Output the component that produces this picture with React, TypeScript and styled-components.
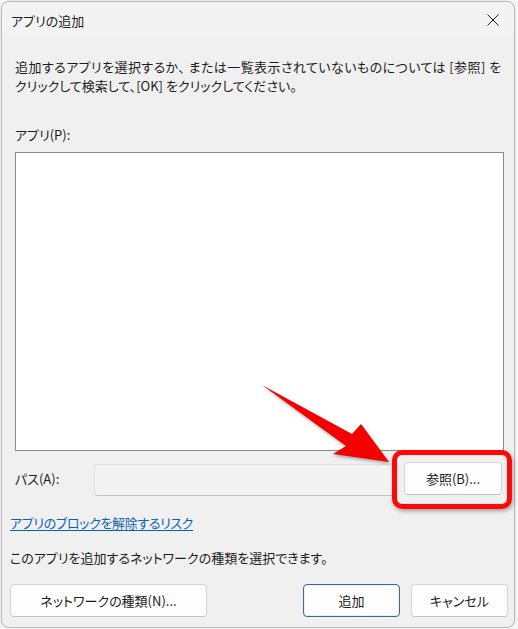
import styled, { createGlobalStyle } from "styled-components";

const GlobalStyle = createGlobalStyle`
  html, body {
    margin: 0;
    padding: 0;
    background: #f7f7f7;
  }
  body {
    font-family: "Noto Sans CJK JP", "Noto Sans", sans-serif;
    font-feature-settings: "palt";
    color: #1b1b1b;
  }
`;

const Window = styled.div`
  position: relative;
  box-sizing: border-box;
  width: 514px;
  height: 627px;
  margin: 1px 0 0 1px;
  border: 1px solid #b9b9b9;
  border-radius: 8px;
  background: #f0f0f0;
  box-shadow: 0 0 3px rgba(0, 0, 0, 0.12);
  display: flex;
  flex-direction: column;
`;

const TitleBar = styled.div`
  flex-shrink: 0;
  height: 36px;
  display: flex;
  align-items: center;
  justify-content: space-between;
  padding: 0 10px 0 9px;
  background: #f3f3f3;
  border-radius: 8px 8px 0 0;
  font-size: 13px;
`;

const CloseButton = styled.div`
  width: 14px;
  height: 14px;
  display: flex;
  align-items: center;
  justify-content: center;
  margin-right: 4px;
`;

const Body = styled.div`
  flex: 1;
  display: flex;
  flex-direction: column;
  padding: 0 6px 9px 8px;
  font-size: 13px;
`;

const Upper = styled.div`
  display: flex;
  flex-direction: column;
  padding: 0 4px 0 5px;
`;

const Text = styled.div<{ $top: number }>`
  margin-top: ${(p) => p.$top}px;
  line-height: 20px;
  white-space: nowrap;
`;

const Line = styled.span<{ $spacing?: number }>`
  display: block;
  height: 19px;
  letter-spacing: ${(p) => p.$spacing ?? 0}px;
`;

const ListBox = styled.div`
  box-sizing: border-box;
  flex-shrink: 0;
  margin-top: 7px;
  height: 299px;
  background: #ffffff;
  border: 1px solid #8a8a8a;
`;

const PathRow = styled.div`
  margin-top: 11px;
  height: 33px;
  display: flex;
  align-items: center;
`;

const PathLabel = styled.span`
  width: 79px;
  line-height: 20px;
`;

const PathInput = styled.div`
  box-sizing: border-box;
  width: 302px;
  height: 32px;
  margin-top: 3px;
  background: #f3f3f3;
  border: 1px solid #dedede;
  border-bottom-color: #c4c4c4;
  border-radius: 3px;
`;

const BrowseWrap = styled.div`
  position: relative;
  margin-left: 8px;
`;

const Button = styled.button<{ $width: number; $primary?: boolean; $gap?: number }>`
  box-sizing: border-box;
  width: ${(p) => p.$width}px;
  height: 33px;
  margin-left: ${(p) => p.$gap ?? 0}px;
  padding: 0;
  font-family: inherit;
  font-feature-settings: inherit;
  font-size: 13px;
  color: #1b1b1b;
  background: #fdfdfd;
  border: 1px solid ${(p) => (p.$primary ? "#3d6a90" : "#d4d4d4")};
  border-bottom-color: ${(p) => (p.$primary ? "#3d6a90" : "#c2c2c2")};
  border-radius: 4px;
  box-shadow: ${(p) => (p.$primary ? "inset 0 0 0 1px #e9eef3" : "none")};
`;

const RedFrame = styled.div`
  position: absolute;
  top: -12px;
  left: -12px;
  right: -10px;
  bottom: -14px;
  border: 5px solid #fa0a0a;
  border-radius: 10px;
  box-shadow: 1px 2px 4px rgba(0, 0, 0, 0.35), inset 0 0 2px rgba(0, 0, 0, 0.2);
  pointer-events: none;
`;

const Arrow = styled.svg`
  position: absolute;
  left: -149px;
  top: -84px;
  width: 140px;
  height: 90px;
  filter: drop-shadow(1px 2px 1.5px rgba(0, 0, 0, 0.3));
  pointer-events: none;
`;

const Link = styled.a`
  margin-top: 18px;
  line-height: 20px;
  letter-spacing: -0.35px;
  color: #0a63b0;
  text-decoration: underline;
  text-underline-offset: 2px;
  align-self: flex-start;
`;

const ButtonRow = styled.div`
  margin-top: 16px;
  display: flex;
  align-items: center;
`;

const Spacer = styled.div`
  flex: 1;
`;

export default function App() {
  return (
    <>
      <GlobalStyle />
      <Window>
        <TitleBar>
          <span>アプリの追加</span>
          <CloseButton>
            <svg width="12" height="12" viewBox="0 0 12 12">
              <path d="M0.5 0.5 L11.5 11.5 M11.5 0.5 L0.5 11.5" stroke="#1b1b1b" strokeWidth="1" />
            </svg>
          </CloseButton>
        </TitleBar>
        <Body>
          <Upper>
            <Text $top={19}>
              <Line $spacing={0.42}>
                追加するアプリを選択するか、 または一覧表示されていないものについては [参照] を
              </Line>
              <Line>クリックして検索して、[OK] をクリックしてください。</Line>
            </Text>
            <Text $top={30}>アプリ(P):</Text>
            <ListBox />
            <PathRow>
              <PathLabel>パス(A):</PathLabel>
              <PathInput />
              <BrowseWrap>
                <Button $width={98}>参照(B)...</Button>
                <RedFrame />
                <Arrow viewBox="255 378 140 90">
                  <polygon
                    points="262,385 352,434 361,424 389,462 333,454 346,446"
                    fill="#f40000"
                  />
                </Arrow>
              </BrowseWrap>
            </PathRow>
          </Upper>
          <Link>アプリのブロックを解除するリスク</Link>
          <Text $top={15}>このアプリを追加するネットワークの種類を選択できます。</Text>
          <ButtonRow>
            <Button $width={197}>ネットワークの種類(N)...</Button>
            <Spacer />
            <Button $width={97} $primary>
              追加
            </Button>
            <Button $width={97} $gap={11}>
              キャンセル
            </Button>
          </ButtonRow>
        </Body>
      </Window>
    </>
  );
}
